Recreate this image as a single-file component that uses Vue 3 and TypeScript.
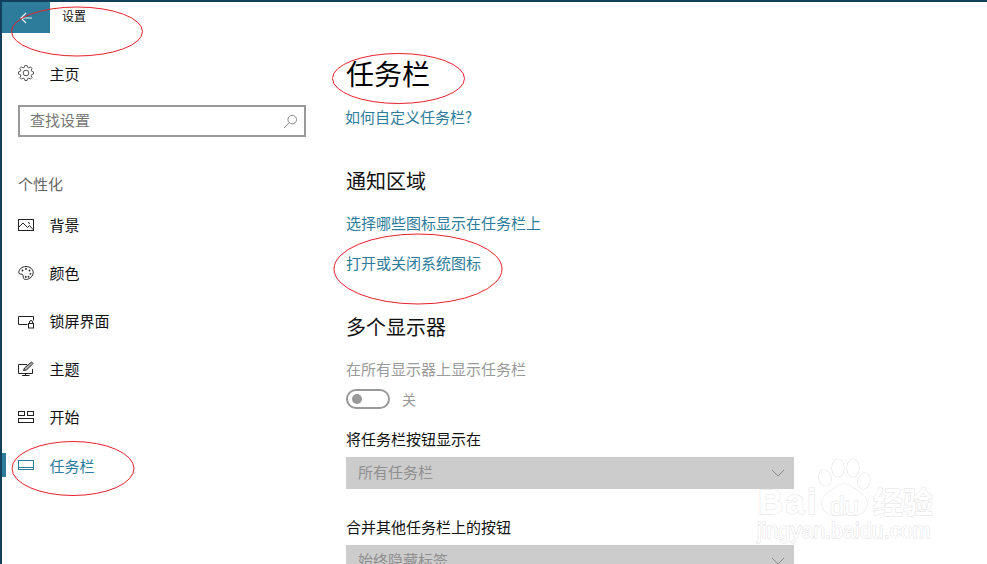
<script setup lang="ts">
interface NavItem { label: string; icon: string; active?: boolean }
const items: NavItem[] = [
  { label: '背景', icon: 'bg' },
  { label: '颜色', icon: 'color' },
  { label: '锁屏界面', icon: 'lock' },
  { label: '主题', icon: 'theme' },
  { label: '开始', icon: 'start' },
  { label: '任务栏', icon: 'task', active: true },
]

const gearPoints: string = (() => {
  const pts: string[] = []
  const teeth = 8
  for (let i = 0; i < teeth; i++) {
    const a = (i / teeth) * Math.PI * 2
    const step = (Math.PI * 2) / teeth
    const add = (r: number, o: number) => {
      const t = a + o * step
      pts.push(`${(8 + r * Math.cos(t)).toFixed(2)},${(8 + r * Math.sin(t)).toFixed(2)}`)
    }
    add(5.9, -0.36)
    add(7.6, -0.18)
    add(7.6, 0.18)
    add(5.9, 0.36)
  }
  return pts.join(' ')
})()
</script>

<template>
  <div class="page">
    <aside class="side">
      <header class="top">
        <button class="back" aria-label="返回">
          <svg width="16" height="16" viewBox="0 0 16 16" fill="none" stroke="#e6f0f4" stroke-width="1.2">
            <path d="M7 3 2 8l5 5M2 8h11" />
          </svg>
        </button>
        <span class="app">设置</span>
      </header>
      <div class="home">
        <svg class="ic" width="16" height="16" viewBox="0 0 16 16" fill="none" stroke="#555" stroke-width="1">
          <circle cx="8" cy="8" r="2.800" />
          <polygon :points="gearPoints" />
        </svg>
        <span>主页</span>
      </div>
      <div class="search">
        <span>查找设置</span>
        <svg width="15" height="15" viewBox="0 0 15 15" fill="none" stroke="#888" stroke-width="1">
          <circle cx="9.200" cy="5.600" r="4.300" />
          <path d="M6 8.800 1 14" />
        </svg>
      </div>
      <div class="group">个性化</div>
      <nav class="nav">
        <div v-for="it in items" :key="it.label" class="row" :class="{ on: it.active }">
          <svg class="ic" width="16" height="16" viewBox="0 0 16 16" fill="none" stroke="currentColor" stroke-width="1">
            <template v-if="it.icon === 'bg'">
              <rect x="0.500" y="2.500" width="15" height="11" />
              <path d="M1 10 5 6l4.500 4.500 2-2 3.500 4M10 5.500l2 1" />
            </template>
            <template v-else-if="it.icon === 'color'">
              <path d="M8 1.500C4 1.500.8 4.200.8 7.600c0 2 2.400 1.200 3.600 1.800 1.300.7.3 2.500 1.200 4 .8 1.200 2.400 1.300 4 .8 3-.9 5.600-3.400 5.600-6.600 0-3.400-3.100-6.100-7.200-6.100z" />
              <g fill="currentColor" stroke="none">
                <circle cx="4.500" cy="5.500" r=".9" /><circle cx="8" cy="4" r=".9" /><circle cx="11.500" cy="5.500" r=".9" />
                <circle cx="12.400" cy="8.800" r=".9" /><circle cx="10.500" cy="11.600" r=".9" /><circle cx="7.800" cy="12" r=".9" />
              </g>
            </template>
            <template v-else-if="it.icon === 'lock'">
              <path d="M9.500 11.500H.5v-8h15v4" />
              <rect x="10.500" y="10.500" width="5" height="4.500" />
              <path d="M11.500 10.500V9a1.500 1.500 0 0 1 3 0v1.500" />
            </template>
            <template v-else-if="it.icon === 'theme'">
              <path d="M9 3.500H.5v9h14V8M7.500 12.500v2M4 14.500h7.500" />
              <path d="m5.500 9.500 1-2.500 7-6 1.500 1.500-6.500 6.500z" fill="currentColor" fill-opacity=".35" />
            </template>
            <template v-else-if="it.icon === 'start'">
              <rect x="0.500" y="2.500" width="6" height="4" />
              <rect x="9.500" y="2.500" width="6" height="4" />
              <rect x="0.500" y="9.500" width="15" height="4" />
            </template>
            <template v-else>
              <rect x="0.500" y="3.500" width="15" height="9" />
              <path d="M1 10.500h14" />
            </template>
          </svg>
          <span>{{ it.label }}</span>
        </div>
      </nav>
    </aside>

    <main class="main">
      <h1>任务栏</h1>
      <a class="link help">如何自定义任务栏?</a>
      <h2 class="notify">通知区域</h2>
      <a class="link l1">选择哪些图标显示在任务栏上</a>
      <a class="link l2">打开或关闭系统图标</a>
      <h2 class="multi">多个显示器</h2>
      <div class="muted">在所有显示器上显示任务栏</div>
      <div class="toggle-row">
        <span class="toggle"><i></i></span>
        <span class="off">关</span>
      </div>
      <div class="label first">将任务栏按钮显示在</div>
      <div class="select">
        <span>所有任务栏</span>
        <svg width="14" height="8" viewBox="0 0 14 8" fill="none" stroke="#8a8a8a"><path d="m1 1 6 6 6-6" /></svg>
      </div>
      <div class="label second">合并其他任务栏上的按钮</div>
      <div class="select">
        <span>始终隐藏标签</span>
        <svg width="14" height="8" viewBox="0 0 14 8" fill="none" stroke="#8a8a8a"><path d="m1 1 6 6 6-6" /></svg>
      </div>
    </main>

    <svg class="marks" width="987" height="564" viewBox="0 0 987 564" fill="none" stroke="#e8202c" stroke-width="1">
      <ellipse cx="77" cy="31.500" rx="65.500" ry="24.500" />
      <ellipse cx="73" cy="468.500" rx="61" ry="27" />
      <ellipse cx="398.500" cy="78.500" rx="66" ry="25" />
      <ellipse cx="418" cy="269" rx="84" ry="35" />
    </svg>

    <div class="wm">
      <span class="wm-bai">Bai</span>
      <svg class="paw" width="54" height="60" viewBox="0 0 54 60" fill="#fff" stroke="#e4e4e4" stroke-width="1.200">
        <ellipse cx="7" cy="20" rx="6" ry="8" transform="rotate(-15 7 20)" />
        <ellipse cx="20" cy="10" rx="6" ry="9" />
        <ellipse cx="35" cy="10" rx="6" ry="9" />
        <ellipse cx="46" cy="23" rx="6" ry="8" transform="rotate(15 46 23)" />
        <path d="M26 26c-6 0-9 4-13 7C6 37 3 41 4 47c1 7 8 11 15 10 5-1 9-1 14 0 8 1 15-3 16-10 1-6-3-10-9-14-5-3-8-7-14-7z" />
      </svg>
      <span class="wm-du">du</span>
      <span class="wm-cn">经验</span>
      <span class="wm-url">jingyan.baidu.com</span>
    </div>
  </div>
</template>

<style>
html, body { margin: 0; padding: 0; background: #fff; overflow: hidden; }
</style>

<style scoped>
.page {
  position: relative;
  width: 987px;
  height: 564px;
  box-sizing: border-box;
  overflow: hidden;
  display: flex;
  background: #fff;
  border-top: 2px solid #123f5c;
  border-left: 2px solid #123f5c;
  font-family: "Noto Sans CJK SC", "Noto Sans", sans-serif;
  color: #111;
  font-size: 15px;
}
.side { width: 344px; flex: none; display: flex; flex-direction: column; }
.top { display: flex; align-items: center; height: 31px; }
.back {
  width: 48px; height: 31px; border: 0; padding: 0 0 0 1px; background: #2d7c9b;
  display: flex; align-items: center; justify-content: center;
}
.app { margin-left: 12px; font-size: 12px; color: #111; margin-top: -4px; }
.ic { flex: none; }
.home {
  display: flex; align-items: center; gap: 15.500px; height: 24px;
  margin: 28px 0 0 16px;
}
.search {
  margin: 20px 0 0 16px; width: 288px; height: 32px; box-sizing: border-box;
  border: 2px solid #999; display: flex; align-items: center; justify-content: space-between;
  padding: 0 6px 0 10px; color: #777;
}
.search span { padding-bottom: 4px; }
.group { margin: 35px 0 0 16px; height: 24px; line-height: 24px; color: #666; }
.nav { display: flex; flex-direction: column; margin-top: 5px; }
.row {
  height: 48px; display: flex; align-items: center; gap: 15.500px; padding-left: 16px;
  box-sizing: border-box; position: relative; color: #222;
}
.row span { color: #111; padding-bottom: 2px; }
.row.on { color: #2d7c9b; }
.row.on span { color: #2d7c9b; padding-bottom: 0; }
.row.on::before {
  content: ""; position: absolute; left: 0; top: 12px; width: 4px; height: 24px; background: #2d7c9b;
}
.main { flex: 1; display: flex; flex-direction: column; align-items: flex-start; }
h1 { margin: 51px 0 0; font-size: 28px; font-weight: 400; line-height: 40px; color: #000; }
h2 { margin: 0; font-size: 20px; font-weight: 400; line-height: 28px; color: #111; }
.link { color: #2d7c9b; line-height: 22px; }
.help { margin: 13px 0 0 -1px; }
.notify { margin-top: 39px; }
.l1 { margin-top: 17px; }
.l2 { margin-top: 18px; }
.multi { margin-top: 39px; }
.muted { color: #9a9a9a; line-height: 22px; margin-top: 17px; }
.toggle-row { display: flex; align-items: center; gap: 12px; margin-top: 9px; height: 20px; }
.toggle {
  width: 44px; height: 20px; box-sizing: border-box; border: 2px solid #999; border-radius: 10px;
  display: flex; align-items: center; padding-left: 4px;
}
.toggle i { width: 10px; height: 10px; border-radius: 50%; background: #999; }
.off { color: #9a9a9a; font-size: 14px; }
.label { line-height: 22px; color: #111; }
.first { margin-top: 19px; }
.second { margin-top: 27px; }
.select {
  margin-top: 7px; width: 448px; height: 32px; flex: none; box-sizing: border-box; background: #ccc;
  display: flex; align-items: center; justify-content: space-between; padding: 0 9px 0 12px; color: #8f8f8f;
}
.select span { padding-bottom: 4px; }
.marks { position: absolute; left: -2px; top: -2px; pointer-events: none; }
.wm {
  position: absolute; left: 756px; top: 456px; width: 180px; height: 90px; pointer-events: none;
  font-family: "Liberation Sans", sans-serif; color: #fff;
  -webkit-text-stroke: 1px #e2e2e2; paint-order: stroke;
}
.wm span { position: absolute; white-space: nowrap; }
.wm-bai { left: 0; top: 24px; font-size: 35px; line-height: 40px; font-weight: 700; letter-spacing: 2px; }
.paw { position: absolute; left: 60px; top: 0; }
.wm-du { left: 72px; top: 34px; font-size: 26px; line-height: 28px; }
.wm-cn {
  left: 115px; top: 22px; font-size: 30px; line-height: 40px;
  font-family: "Noto Sans CJK SC", sans-serif; font-weight: 700;
}
.wm-url { left: -1px; top: 60px; font-size: 21.500px; line-height: 26px; }
</style>
